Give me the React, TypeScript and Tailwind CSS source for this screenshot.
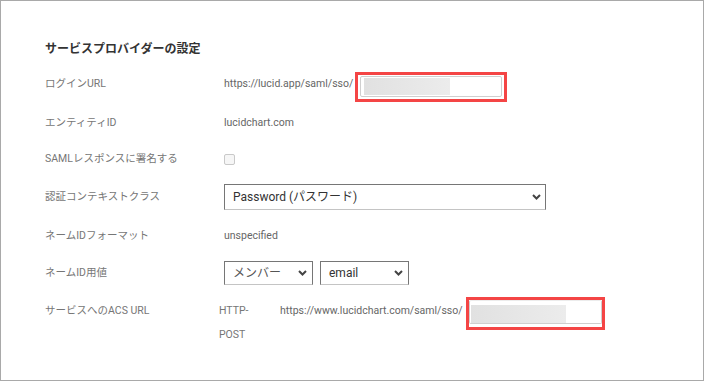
import type React from "react"

const font = { fontFamily: "Roboto, 'Noto Sans CJK JP', sans-serif" }

const Chevron = () => (
  <svg width="9" height="6" viewBox="0 0 9 6" className="shrink-0">
    <path d="M1 1l3.5 3.5L8 1" fill="none" stroke="#444" strokeWidth="2" />
  </svg>
)

const Redacted: React.FC<{ outer: string; inner: string; fill: string }> = ({ outer, inner, fill }) => (
  <div className={`border-[3px] border-[#f44545] ${outer}`}>
    <div className={`h-full border border-[#cfcfcf] rounded-[2px] ${inner}`}>
      <div className={`h-full bg-gradient-to-r from-[#e1e1e1] to-[#ececec] ${fill}`}></div>
    </div>
  </div>
)

const Row: React.FC<{ label: string; h: string; children?: React.ReactNode }> = ({ label, h, children }) => (
  <div className={`flex items-center ${h}`}>
    <div className="w-[179px] shrink-0 text-[10.5px] leading-[14px] text-[#767676]">{label}</div>
    {children}
  </div>
)

export default function App() {
  return (
    <div style={font} className="w-[704px] h-[381px] border border-[#a9a9a9] bg-white pl-[44px] pt-[40px]">
      <h2 className="text-[12px] leading-[16px] font-bold text-[#333]">サービスプロバイダーの設定</h2>

      <div className="mt-[8px] flex flex-col">
        <Row label="ログインURL" h="h-[38px]">
          <span className="text-[10.5px] leading-[14px] text-[#666]">https://lucid.app/saml/sso/</span>
          <Redacted outer="ml-[2px] mt-[6px] w-[152px] h-[30px] pt-[1px] pb-[2px] px-[2px]" inner="pl-[3px] py-[1px]" fill="w-[86px]" />
        </Row>

        <Row label="エンティティID" h="h-[40px]">
          <span className="text-[10.5px] leading-[14px] text-[#666]">lucidchart.com</span>
        </Row>

        <Row label="SAMLレスポンスに署名する" h="h-[32px]">
          <div className="w-[11px] h-[11px] rounded-[2px] border border-[#c9c9c9] bg-[#f6f6f6]"></div>
        </Row>

        <Row label="認証コンテキストクラス" h="h-[44px]">
          <div className="w-[322px] h-[26px] flex items-center justify-between pl-[8px] pr-[4px] border border-[#767676] border-b-[#c4c4c4] text-[12px] text-[#333]">
            <span>Password (パスワード)</span>
            <Chevron />
          </div>
        </Row>

        <Row label="ネームIDフォーマット" h="h-[34px]">
          <span className="text-[10.5px] leading-[14px] text-[#666]">unspecified</span>
        </Row>

        <Row label="ネームID用値" h="h-[40px]">
          <div className="flex gap-[7px]">
            <div className="w-[89px] h-[24px] flex items-center justify-between pl-[8px] pr-[5px] border border-[#767676] border-b-[#c4c4c4] text-[12px] text-[#555]">
              <span>メンバー</span>
              <Chevron />
            </div>
            <div className="w-[89px] h-[24px] flex items-center justify-between pl-[8px] pr-[5px] border border-[#767676] border-b-[#c4c4c4] text-[12px] text-[#333]">
              <span>email</span>
              <Chevron />
            </div>
          </div>
        </Row>

        <div className="flex items-start">
          <div className="w-[174px] shrink-0 mt-[11px] text-[10.5px] leading-[14px] text-[#767676]">サービスへのACS URL</div>
          <div className="w-[40px] mr-[21px] mt-[6px] text-[10.5px] leading-[24px] text-[#767676]">HTTP-POST</div>
          <span className="mt-[11px] text-[10.5px] leading-[14px] text-[#666]">https://www.lucidchart.com/saml/sso/</span>
          <Redacted outer="ml-[3px] mt-[4px] w-[139px] h-[33px] pt-0 pb-[3px] px-0" inner="border-t-[#ececec] pl-[1px] pt-[4px]" fill="w-[95px]" />
        </div>
      </div>
    </div>
  )
}
